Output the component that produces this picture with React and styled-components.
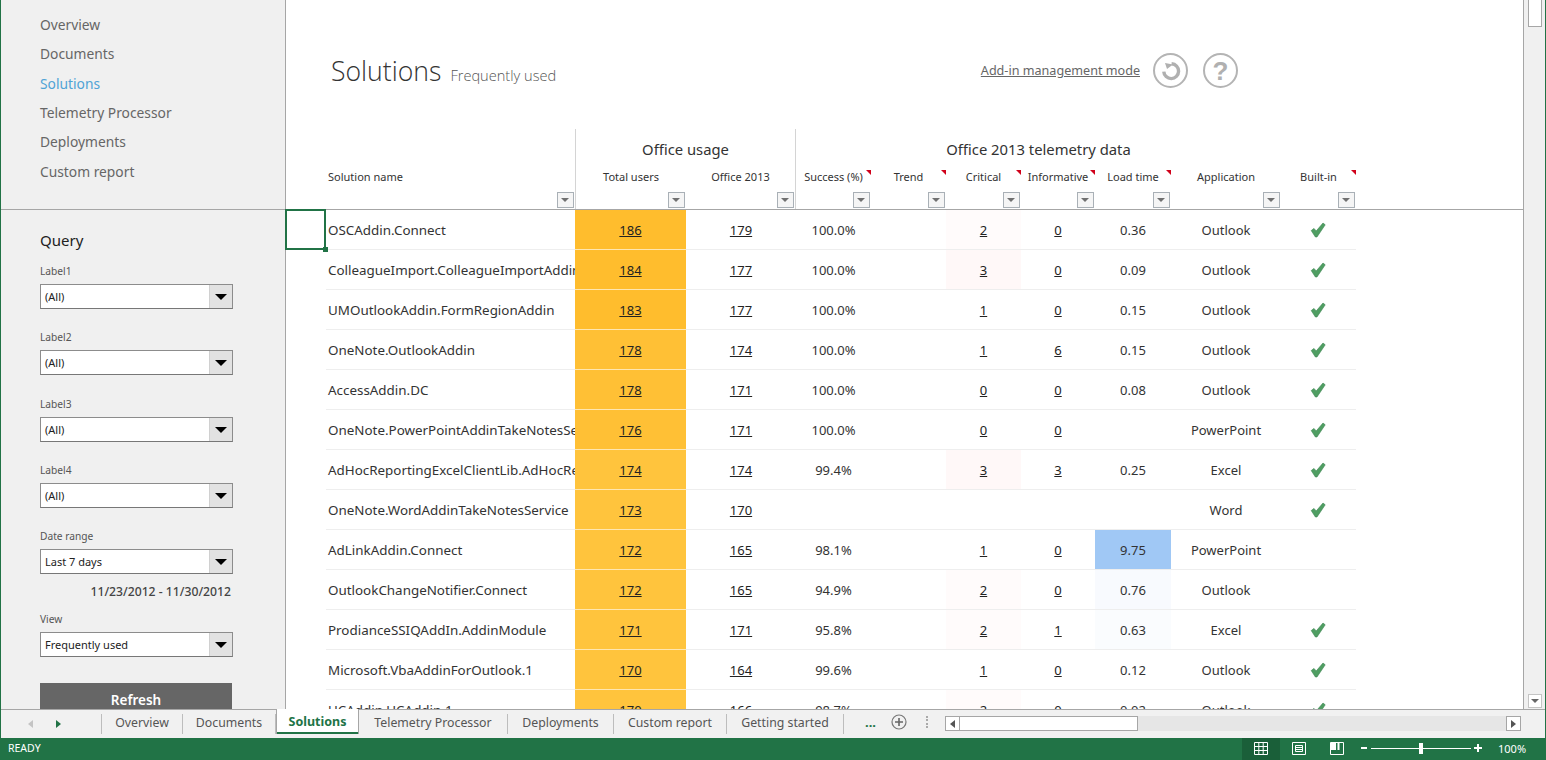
import React from 'react';
import styled, { createGlobalStyle } from 'styled-components';

const GREEN = '#217346';
const FONT = `'Noto Sans', 'Open Sans', 'Liberation Sans', sans-serif`;
const COLUMNS = '40px 249px 111px 110px 75px 75px 75px 74px 76px 110px 75px';

const navItems = [ 'Overview', 'Documents', 'Solutions', 'Telemetry Processor', 'Deployments', 'Custom report' ];

const filters = [
  { label: 'Label1', value: '(All)' },
  { label: 'Label2', value: '(All)' },
  { label: 'Label3', value: '(All)' },
  { label: 'Label4', value: '(All)' },
];

const headers = [
  { label: 'Total users', col: 3, sep: true },
  { label: 'Office 2013', col: 4, end: true },
  { label: 'Success (%)', col: 5, note: true },
  { label: 'Trend', col: 6, note: true },
  { label: 'Critical', col: 7, note: true },
  { label: 'Informative', col: 8, note: true },
  { label: 'Load time', col: 9, note: true },
  { label: 'Application', col: 10 },
  { label: 'Built-in', col: 11, note: true },
];

const rows = [
  [ 'OSCAddin.Connect', 186, 179, '100.0%', 2, 0, '0.36', 'Outlook', true ],
  [ 'ColleagueImport.ColleagueImportAddin', 184, 177, '100.0%', 3, 0, '0.09', 'Outlook', true ],
  [ 'UMOutlookAddin.FormRegionAddin', 183, 177, '100.0%', 1, 0, '0.15', 'Outlook', true ],
  [ 'OneNote.OutlookAddin', 178, 174, '100.0%', 1, 6, '0.15', 'Outlook', true ],
  [ 'AccessAddin.DC', 178, 171, '100.0%', 0, 0, '0.08', 'Outlook', true ],
  [ 'OneNote.PowerPointAddinTakeNotesSe', 176, 171, '100.0%', 0, 0, '', 'PowerPoint', true ],
  [ 'AdHocReportingExcelClientLib.AdHocRe', 174, 174, '99.4%', 3, 3, '0.25', 'Excel', true ],
  [ 'OneNote.WordAddinTakeNotesService', 173, 170, '', null, null, '', 'Word', true ],
  [ 'AdLinkAddin.Connect', 172, 165, '98.1%', 1, 0, '9.75', 'PowerPoint', false ],
  [ 'OutlookChangeNotifier.Connect', 172, 165, '94.9%', 2, 0, '0.76', 'Outlook', false ],
  [ 'ProdianceSSIQAddIn.AddinModule', 171, 171, '95.8%', 2, 1, '0.63', 'Excel', true ],
  [ 'Microsoft.VbaAddinForOutlook.1', 170, 164, '99.6%', 1, 0, '0.12', 'Outlook', true ],
  [ 'UCAddin.UCAddin.1', 170, 166, '98.7%', 2, 0, '0.02', 'Outlook', true ],
];

const sheetTabs = [
  { name: 'Overview', width: 81 },
  { name: 'Documents', width: 93 },
  { name: 'Solutions', width: 83, active: true },
  { name: 'Telemetry Processor', width: 149 },
  { name: 'Deployments', width: 106 },
  { name: 'Custom report', width: 113 },
  { name: 'Getting started', width: 117 },
];

const usersTint = ( users ) => users >= 180 ? '#ffbd2d' : users >= 175 ? '#ffc035' : '#ffc43d';
const criticalTint = ( n ) => n === 3 ? '#fff8f8' : n === 2 ? '#fffbfb' : 'transparent';
const loadTint = ( load ) => {
  if ( load === '9.75' ) return '#a0c8f5';
  if ( load === '0.76' ) return '#f8fafe';
  if ( load === '0.63' ) return '#fafcfe';
  return 'transparent';
};

const Check = () => (
  <CheckIcon width="16" height="16" viewBox="0 0 16 16">
    <path d="M1.2 8.6 L4 6.4 L6.2 9 L13 1 L15.2 2.8 L7 15 L5.4 15 Z" fill="#4f9e62" stroke="#3b8350" strokeWidth=".6" />
  </CheckIcon>
);

const App = () => (
  <Window>
    <GlobalStyle />
    <Workspace>
      <Sidebar>
        <Nav>
          { navItems.map( item => <NavItem key={ item } $active={ item === 'Solutions' }>{ item }</NavItem> ) }
        </Nav>
        <Query>
          <QueryTitle>Query</QueryTitle>
          { filters.map( f => (
            <Field key={ f.label }>
              <FieldLabel>{ f.label }</FieldLabel>
              <Select><SelectValue>{ f.value }</SelectValue><SelectArrow /></Select>
            </Field>
          ) ) }
          <DateField>
            <FieldLabel>Date range</FieldLabel>
            <Select><SelectValue>Last 7 days</SelectValue><SelectArrow /></Select>
            <DateText>11/23/2012 - 11/30/2012</DateText>
          </DateField>
          <Field>
            <FieldLabel>View</FieldLabel>
            <Select><SelectValue>Frequently used</SelectValue><SelectArrow /></Select>
          </Field>
          <RefreshButton>Refresh</RefreshButton>
        </Query>
      </Sidebar>

      <Sheet>
        <TitleBar>
          <TitleGroup>
            <Title>Solutions</Title>
            <Subtitle>Frequently used</Subtitle>
          </TitleGroup>
          <Actions>
            <ModeLink>Add-in management mode</ModeLink>
            <RoundButton>
              <svg width="28" height="28" viewBox="0 0 28 28">
                <path d="M14.6 6.8 A7.4 7.4 0 1 1 6.8 14.6" fill="none" stroke="#b0b0b0" strokeWidth="3.4" />
                <path d="M8 6 L16 7.5 L10 12 Z" fill="#b0b0b0" />
              </svg>
            </RoundButton>
            <RoundButton><HelpMark>?</HelpMark></RoundButton>
          </Actions>
        </TitleBar>

        <TableHead>
          <GroupTitle $col="3 / span 2" $sep>Office usage</GroupTitle>
          <GroupTitle $col="5 / span 6">Office 2013 telemetry data</GroupTitle>
          <HeadCell $col={ 2 } $left>
            <HeadLabel>Solution name</HeadLabel>
            <FilterButton />
          </HeadCell>
          { headers.map( h => (
            <HeadCell key={ h.label } $col={ h.col } $sep={ h.sep } $end={ h.end }>
              <HeadLabel>{ h.label }</HeadLabel>
              { h.note && <NoteMark /> }
              <FilterButton />
            </HeadCell>
          ) ) }
        </TableHead>

        { rows.map( ( r, i ) => (
          <Row key={ r[ 0 ] }>
            <SelectCell $selected={ i === 0 } />
            <NameCell>{ r[ 0 ] }</NameCell>
            <Cell $bg={ usersTint( r[ 1 ] ) } $onHeat><NumLink>{ r[ 1 ] }</NumLink></Cell>
            <Cell><NumLink>{ r[ 2 ] }</NumLink></Cell>
            <Cell>{ r[ 3 ] }</Cell>
            <Cell />
            <Cell $bg={ criticalTint( r[ 4 ] ) }>{ r[ 4 ] !== null && <NumLink>{ r[ 4 ] }</NumLink> }</Cell>
            <Cell>{ r[ 5 ] !== null && <NumLink>{ r[ 5 ] }</NumLink> }</Cell>
            <Cell $bg={ loadTint( r[ 6 ] ) }>{ r[ 6 ] }</Cell>
            <Cell>{ r[ 7 ] }</Cell>
            <Cell>{ r[ 8 ] && <Check /> }</Cell>
          </Row>
        ) ) }
      </Sheet>

      <VScroll>
        <VThumb />
        <VDown />
      </VScroll>
    </Workspace>

    <TabBar>
      <TabNav>
        <TabArrow $dir="left" $color="#c4c4c4" />
        <TabArrow $dir="right" $color={ GREEN } />
      </TabNav>
      { sheetTabs.map( t => <Tab key={ t.name } $active={ t.active } $width={ t.width }>{ t.name }</Tab> ) }
      <TabMore>...</TabMore>
      <AddSheet>
        <svg width="16" height="16" viewBox="0 0 16 16">
          <circle cx="8" cy="8" r="7" fill="none" stroke="#777" strokeWidth="1.2" />
          <path d="M8 4 V12 M4 8 H12" stroke="#666" strokeWidth="1.6" />
        </svg>
      </AddSheet>
      <Splitter />
      <HScroll>
        <HButton><TabArrow $dir="left" $color="#555" /></HButton>
        <HThumb />
        <HTrack />
        <HButton><TabArrow $dir="right" $color="#555" /></HButton>
      </HScroll>
    </TabBar>

    <StatusBar>
      <StatusText>READY</StatusText>
      <StatusRight>
        <ViewButton $active>
          <svg width="14" height="13" viewBox="0 0 14 13">
            <path d="M.5 .5 H13.5 V12.5 H.5 Z M.5 4.5 H13.5 M.5 8.5 H13.5 M4.8 .5 V12.5 M9.2 .5 V12.5" fill="none" stroke="#fff" />
          </svg>
        </ViewButton>
        <ViewButton>
          <svg width="14" height="13" viewBox="0 0 14 13">
            <path d="M.5 .5 H13.5 V12.5 H.5 Z M3.5 3.5 H10.5 V9.5 H3.5 Z M3.5 5.5 H10.5 M3.5 7.5 H10.5" fill="none" stroke="#fff" />
          </svg>
        </ViewButton>
        <ViewButton>
          <svg width="14" height="13" viewBox="0 0 14 13">
            <path d="M.5 .5 H13.5 V12.5 H.5 Z" fill="none" stroke="#fff" />
            <path d="M1 1 H6 V8 H1 Z M7.5 1 H9.5 V8 H7.5 Z" fill="#fff" />
          </svg>
        </ViewButton>
        <Zoom>
          <ZoomSign>
            <svg width="8" height="8" viewBox="0 0 8 8"><path d="M1 4 H7" stroke="#fff" strokeWidth="2" /></svg>
          </ZoomSign>
          <ZoomTrack><ZoomThumb /></ZoomTrack>
          <ZoomSign>
            <svg width="8" height="8" viewBox="0 0 8 8"><path d="M0 4 H8 M4 0 V8" stroke="#fff" strokeWidth="2" /></svg>
          </ZoomSign>
        </Zoom>
        <ZoomValue>100%</ZoomValue>
      </StatusRight>
    </StatusBar>
  </Window>
);

const GlobalStyle = createGlobalStyle`
  html, body { margin: 0; padding: 0; height: 100%; overflow: hidden; }
  * { box-sizing: border-box; }
  body { font-family: ${ FONT }; color: #333; background: #fff; }
`;

const Window = styled.div`
  width: 1546px;
  height: 760px;
  display: flex;
  flex-direction: column;
  overflow: hidden;
  border-left: 1px solid ${ GREEN };
  border-right: 1px solid ${ GREEN };
  background: #fff;
`;

const Workspace = styled.div`
  height: 710px;
  flex: none;
  display: flex;
  overflow: hidden;
  border-bottom: 1px solid #a6a6a6;
`;

const Sidebar = styled.aside`
  width: 285px;
  flex: none;
  background: #f0f0f0;
  border-right: 1px solid #a6a6a6;
  overflow: hidden;
`;

const Nav = styled.nav`
  height: 210px;
  padding: 10px 0 0 39px;
  border-bottom: 1px solid #a6a6a6;
`;

const NavItem = styled.div`
  height: 29.33px;
  line-height: 29px;
  font-size: 13.8px;
  color: ${ props => props.$active ? '#4fa3d6' : '#666' };
`;

const Query = styled.div`
  padding: 18px 0 0 39px;
`;

const QueryTitle = styled.div`
  height: 24px;
  line-height: 24px;
  font-size: 15px;
  color: #222;
  margin-bottom: 11px;
`;

const Field = styled.div`
  height: 66.25px;
`;

const DateField = styled.div`
  height: 83px;
`;

const FieldLabel = styled.div`
  height: 21px;
  line-height: 16px;
  font-size: 10.2px;
  color: #555;
`;

const Select = styled.div`
  width: 193px;
  height: 25px;
  display: flex;
  background: #fff;
  border: 1px solid #8c8c8c;
  border-bottom-color: #777;
`;

const SelectValue = styled.div`
  flex: 1;
  padding-left: 4px;
  line-height: 24px;
  font-size: 11px;
  color: #222;
`;

const SelectArrow = styled.div`
  width: 23px;
  background: #e2e2e2;
  border-left: 1px solid #d0d0d0;
  position: relative;
  &::after {
    content: '';
    position: absolute;
    left: 5px;
    top: 9px;
    border-left: 6px solid transparent;
    border-right: 6px solid transparent;
    border-top: 6px solid #000;
  }
`;

const DateText = styled.div`
  width: 191px;
  margin-top: 9px;
  text-align: right;
  font-size: 12.2px;
  font-weight: 500;
  line-height: 17px;
  color: #444;
`;

const RefreshButton = styled.div`
  width: 192px;
  height: 34px;
  margin-top: 6px;
  background: #666;
  color: #fff;
  text-align: center;
  font-size: 13.5px;
  font-weight: 600;
  line-height: 34px;
`;

const Sheet = styled.main`
  width: 1238px;
  flex: none;
  margin-left: -1px;
  padding-left: 1px;
  position: relative;
  overflow: hidden;
`;

const TitleBar = styled.header`
  height: 129px;
  padding: 12px 285px 0 45px;
  display: flex;
  align-items: center;
  justify-content: space-between;
`;

const TitleGroup = styled.div`
  display: flex;
  align-items: baseline;
  gap: 9px;
`;

const Title = styled.h1`
  margin: 0;
  font-family: 'Open Sans', ${ FONT };
  font-size: 26.6px;
  font-weight: 300;
  color: #333;
`;

const Subtitle = styled.span`
  font-family: 'Open Sans', ${ FONT };
  font-size: 14.6px;
  font-weight: 300;
  color: #555;
`;

const Actions = styled.div`
  display: flex;
  align-items: center;
  gap: 15px;
`;

const ModeLink = styled.a`
  font-size: 12.6px;
  color: #666;
  text-decoration: underline;
  margin-right: -2px;
`;

const RoundButton = styled.div`
  width: 35px;
  height: 35px;
  border-radius: 50%;
  border: 2.5px solid #b4b4b4;
  display: flex;
  align-items: center;
  justify-content: center;
`;

const HelpMark = styled.span`
  font-family: 'Liberation Sans', sans-serif;
  font-size: 26px;
  font-weight: 700;
  line-height: 1;
  color: #b0b0b0;
`;

const TableHead = styled.div`
  height: 81px;
  display: grid;
  grid-template-columns: ${ COLUMNS };
  grid-template-rows: 36px 1fr;
  border-bottom: 1px solid #a6a6a6;
`;

const GroupTitle = styled.div`
  grid-row: 1;
  grid-column: ${ props => props.$col };
  padding-top: 7px;
  text-align: center;
  font-size: 14.8px;
  line-height: 26px;
  color: #333;
  border-left: ${ props => props.$sep ? '1px solid #d4d4d4' : 'none' };
  border-right: ${ props => props.$sep ? '1px solid #d4d4d4' : 'none' };
`;

const HeadCell = styled.div`
  grid-row: 2;
  grid-column: ${ props => props.$col };
  position: relative;
  display: flex;
  flex-direction: column;
  align-items: ${ props => props.$left ? 'flex-start' : 'center' };
  padding-left: ${ props => props.$left ? '2px' : 0 };
  border-left: ${ props => props.$sep ? '1px solid #d4d4d4' : 'none' };
  border-right: ${ props => props.$end ? '1px solid #d4d4d4' : 'none' };
`;

const HeadLabel = styled.div`
  height: 24px;
  line-height: 24px;
  font-size: 11px;
  color: #333;
  white-space: nowrap;
`;

const NoteMark = styled.i`
  position: absolute;
  top: 5px;
  right: 0;
  border-top: 5px solid #d0021b;
  border-left: 5px solid transparent;
`;

const FilterButton = styled.div`
  position: absolute;
  right: 1px;
  bottom: 1px;
  width: 17px;
  height: 16px;
  background: #f5f5f5;
  border: 1px solid #a9b0b6;
  &::after {
    content: '';
    position: absolute;
    left: 3px;
    top: 5px;
    border-left: 4px solid transparent;
    border-right: 4px solid transparent;
    border-top: 4px solid #707070;
  }
`;

const Row = styled.div`
  height: 40px;
  display: grid;
  grid-template-columns: ${ COLUMNS };
`;

const SelectCell = styled.div`
  position: relative;
  ${ props => props.$selected && `
    &::before {
      content: '';
      position: absolute;
      inset: -1px 0 0 -1px;
      border: 2px solid ${ GREEN };
    }
    &::after {
      content: '';
      position: absolute;
      right: -2px;
      bottom: -2px;
      width: 5px;
      height: 5px;
      background: ${ GREEN };
    }
  ` }
`;

const Cell = styled.div`
  display: flex;
  align-items: center;
  justify-content: center;
  font-size: 13px;
  color: #333;
  padding-top: 1px;
  background: ${ props => props.$bg || 'transparent' };
  border-bottom: 1px solid ${ props => props.$onHeat ? '#ffe6b0' : '#eee' };
`;

const NameCell = styled( Cell )`
  justify-content: flex-start;
  padding-left: 2px;
  font-size: 13.4px;
  overflow: hidden;
  white-space: nowrap;
`;

const NumLink = styled.a`
  color: #222;
  text-decoration: underline;
`;

const CheckIcon = styled.svg`
  margin-right: 2px;
`;

const VScroll = styled.div`
  flex: 1;
  position: relative;
  background: #f0f0f0;
  border-left: 1px solid #a6a6a6;
`;

const VThumb = styled.div`
  position: absolute;
  top: 0;
  left: 4px;
  width: 14px;
  height: 27px;
  background: #fff;
  border: 1px solid #a6a6a6;
  border-top: none;
`;

const VDown = styled.div`
  position: absolute;
  bottom: 1px;
  left: 4px;
  width: 14px;
  height: 14px;
  background: #fff;
  border: 1px solid #c4c4c4;
  &::after {
    content: '';
    position: absolute;
    left: 2px;
    top: 4px;
    border-left: 4px solid transparent;
    border-right: 4px solid transparent;
    border-top: 4px solid #666;
  }
`;

const TabBar = styled.div`
  height: 28px;
  flex: none;
  display: flex;
  align-items: flex-start;
  background: #f1f1f1;
`;

const TabNav = styled.div`
  width: 101px;
  height: 20px;
  margin-top: 4px;
  padding-left: 27px;
  display: flex;
  align-items: center;
  gap: 23px;
  border-right: 1px solid #bdbdbd;
`;

const TabArrow = styled.i`
  display: block;
  width: 0;
  border-top: 4px solid transparent;
  border-bottom: 4px solid transparent;
  border-left: ${ props => props.$dir === 'right' ? `5px solid ${ props.$color }` : 'none' };
  border-right: ${ props => props.$dir === 'left' ? `5px solid ${ props.$color }` : 'none' };
`;

const Tab = styled.div`
  position: relative;
  flex: none;
  width: ${ props => props.$width }px;
  height: ${ props => props.$active ? '25px' : '20px' };
  margin-top: ${ props => props.$active ? '-1px' : '4px' };
  line-height: ${ props => props.$active ? '26px' : '18px' };
  text-align: center;
  font-size: ${ props => props.$active ? '12.5px' : '12.3px' };
  font-weight: ${ props => props.$active ? 700 : 400 };
  color: ${ props => props.$active ? GREEN : '#555' };
  background: ${ props => props.$active ? '#fff' : 'transparent' };
  border-right: 1px solid ${ props => props.$active ? '#a6a6a6' : '#bdbdbd' };
  border-left: ${ props => props.$active ? '1px solid #a6a6a6' : 'none' };
  box-shadow: ${ props => props.$active ? `inset 0 -2px 0 ${ GREEN }` : 'none' };
  white-space: nowrap;
`;

const TabMore = styled.div`
  width: 24px;
  margin-left: 21px;
  height: 24px;
  line-height: 24px;
  font-size: 13px;
  font-weight: 700;
  color: ${ GREEN };
`;

const AddSheet = styled.div`
  height: 24px;
  display: flex;
  align-items: center;
  margin-left: 2px;
`;

const Splitter = styled.div`
  width: 2px;
  height: 12px;
  margin: 6px 17px 0 19px;
  border-left: 2px dotted #aaa;
`;

const HScroll = styled.div`
  width: 576px;
  height: 15px;
  margin-top: 6px;
  display: flex;
`;

const HButton = styled.div`
  width: 15px;
  flex: none;
  display: flex;
  align-items: center;
  justify-content: center;
  background: #fff;
  border: 1px solid #a6a6a6;
`;

const HThumb = styled.div`
  width: 178px;
  flex: none;
  background: #fff;
  border: 1px solid #a6a6a6;
  border-left: none;
`;

const HTrack = styled.div`
  flex: 1;
  background: #e6e6e6;
`;

const StatusBar = styled.footer`
  height: 22px;
  flex: none;
  display: flex;
  align-items: center;
  justify-content: space-between;
  background: ${ GREEN };
  color: #fff;
  margin: 0 -1px;
`;

const StatusText = styled.span`
  padding-left: 8px;
  margin-bottom: 2px;
  font-size: 10.5px;
`;

const StatusRight = styled.div`
  height: 100%;
  display: flex;
  align-items: center;
`;

const ViewButton = styled.div`
  width: 38px;
  height: 100%;
  padding-bottom: 2px;
  display: flex;
  align-items: center;
  justify-content: center;
  background: ${ props => props.$active ? '#1a5f39' : 'transparent' };
`;

const Zoom = styled.div`
  display: flex;
  align-items: center;
  gap: 3px;
  margin: 0 0 2px 4px;
`;

const ZoomSign = styled.div`
  display: flex;
`;

const ZoomTrack = styled.div`
  width: 100px;
  height: 1px;
  position: relative;
  background: #fff;
`;

const ZoomThumb = styled.div`
  position: absolute;
  left: 48px;
  top: -5px;
  width: 4px;
  height: 11px;
  background: #fff;
`;

const ZoomValue = styled.span`
  width: 64px;
  padding-left: 16px;
  margin-bottom: 2px;
  font-size: 11px;
`;

export default App;
